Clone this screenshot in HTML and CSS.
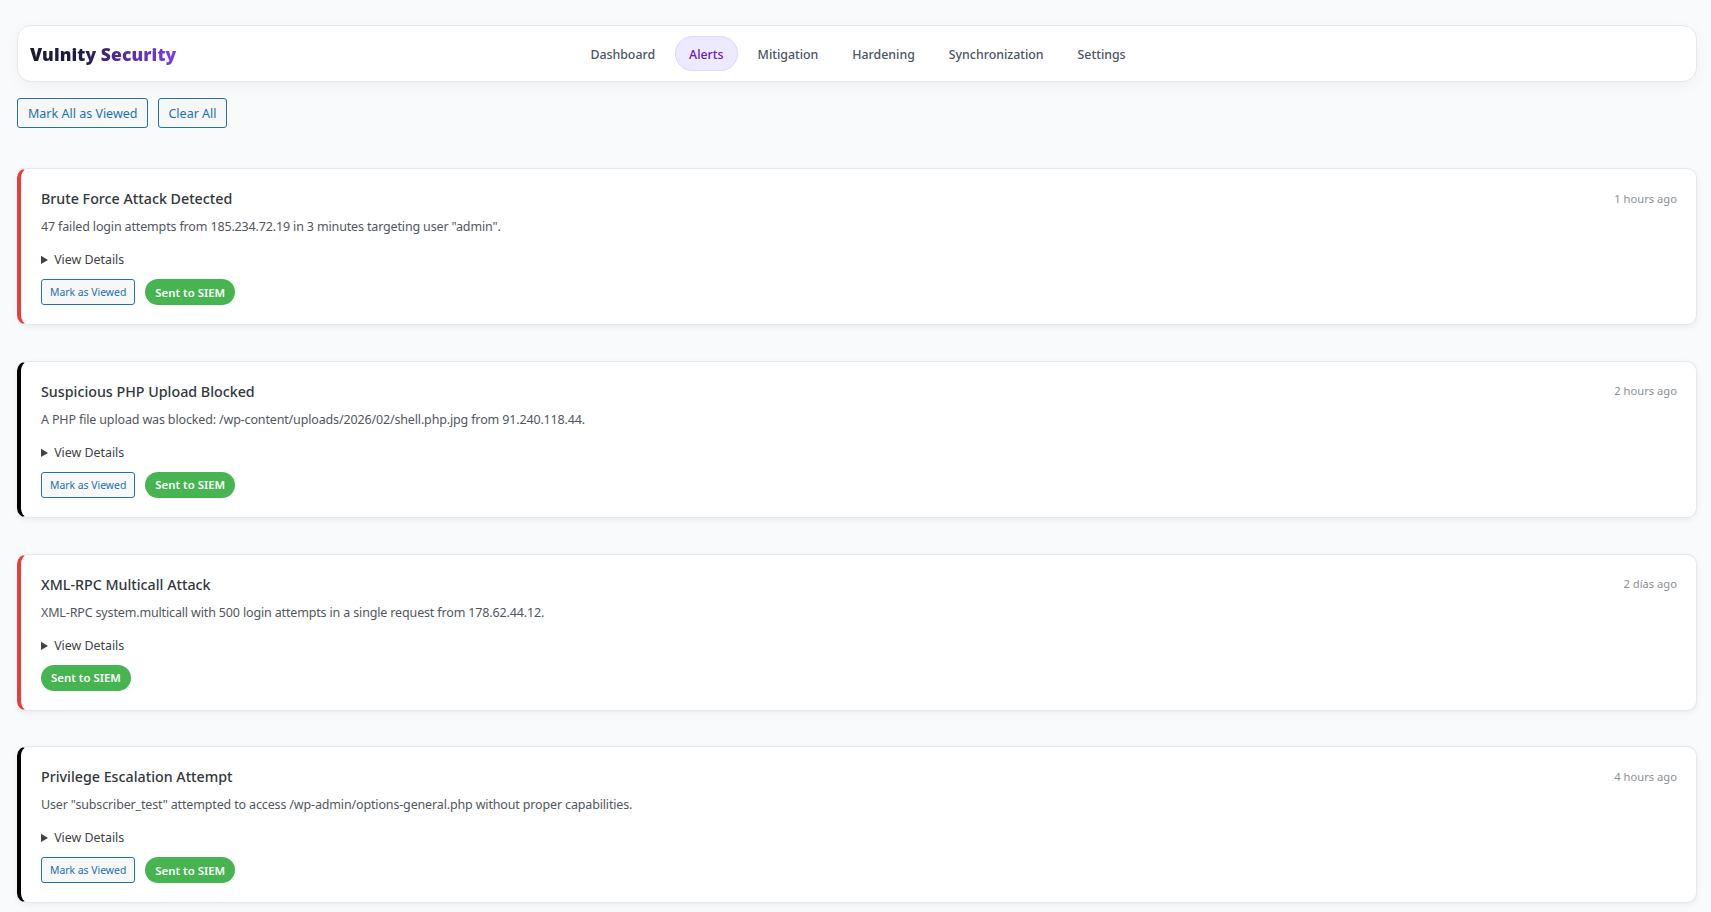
FILE: index.html
```html
<!DOCTYPE html>
<html lang="en">
<head>
<meta charset="utf-8">
<title>Vulnity Security</title>
<link rel="stylesheet" href="styles.css">
</head>
<body>
<header class="topbar">
  <div class="logo">Vulnity Security</div>
  <nav class="nav">
    <a class="nav-item">Dashboard</a>
    <a class="nav-item active">Alerts</a>
    <a class="nav-item">Mitigation</a>
    <a class="nav-item">Hardening</a>
    <a class="nav-item">Synchronization</a>
    <a class="nav-item">Settings</a>
  </nav>
</header>
<div class="bulk">
  <button class="btn">Mark All as Viewed</button>
  <button class="btn tight">Clear All</button>
</div>
<main class="alerts">
  <article class="alert red">
    <div class="alert-head"><h3 class="alert-title">Brute Force Attack Detected</h3><span class="alert-time">1 hours ago</span></div>
    <p class="alert-desc">47 failed login attempts from 185.234.72.19 in 3 minutes targeting user "admin".</p>
    <details class="alert-details"><summary>View Details</summary></details>
    <div class="alert-actions"><button class="btn small">Mark as Viewed</button><span class="siem">Sent to SIEM</span></div>
  </article>
  <article class="alert black">
    <div class="alert-head"><h3 class="alert-title">Suspicious PHP Upload Blocked</h3><span class="alert-time">2 hours ago</span></div>
    <p class="alert-desc">A PHP file upload was blocked: /wp-content/uploads/2026/02/shell.php.jpg from 91.240.118.44.</p>
    <details class="alert-details"><summary>View Details</summary></details>
    <div class="alert-actions"><button class="btn small">Mark as Viewed</button><span class="siem">Sent to SIEM</span></div>
  </article>
  <article class="alert red">
    <div class="alert-head"><h3 class="alert-title">XML-RPC Multicall Attack</h3><span class="alert-time">2 días ago</span></div>
    <p class="alert-desc">XML-RPC system.multicall with 500 login attempts in a single request from 178.62.44.12.</p>
    <details class="alert-details"><summary>View Details</summary></details>
    <div class="alert-actions"><span class="siem">Sent to SIEM</span></div>
  </article>
  <article class="alert black">
    <div class="alert-head"><h3 class="alert-title">Privilege Escalation Attempt</h3><span class="alert-time">4 hours ago</span></div>
    <p class="alert-desc">User "subscriber_test" attempted to access /wp-admin/options-general.php without proper capabilities.</p>
    <details class="alert-details"><summary>View Details</summary></details>
    <div class="alert-actions"><button class="btn small">Mark as Viewed</button><span class="siem">Sent to SIEM</span></div>
  </article>
</main>
</body>
</html>
```
FILE: styles.css
```css
* { box-sizing: border-box; }
html, body { margin: 0; padding: 0; }
body {
  background: #f9fafb;
  font-family: "Noto Sans", "Open Sans", sans-serif;
  font-size: 13px;
  color: #3c434a;
  padding: 25px 14px 0 17px;
  height: 912px;
  overflow: hidden;
}
.topbar {
  height: 57px;
  background: #fff;
  border: 1px solid #e5e7eb;
  border-radius: 14px;
  box-shadow: 0 4px 16px rgba(0,0,0,.04);
  display: grid;
  grid-template-columns: 1fr auto 1fr;
  align-items: center;
  padding: 0 12px;
}
.logo {
  font-family: "Noto Sans", sans-serif;
  font-weight: 900;
  font-size: 17.5px;
  letter-spacing: .1px;
  line-height: 30px;
  justify-self: start;
  background: linear-gradient(90deg, #1a1a2e 0%, #1e1b4b 36%, #4c2a8c 58%, #7c3aed 100%);
  -webkit-background-clip: text;
  background-clip: text;
  color: transparent;
}
.nav { display: flex; gap: 6px; align-items: center; margin-left: 2px; }
.nav-item {
  font-size: 12.35px;
  font-weight: 500;
  color: #4b5563;
  padding: 8.5px 13px 7.5px;
  border: 1px solid transparent;
  border-radius: 18px;
  line-height: 17px;
}
.nav-item.active {
  background: #ede9fe;
  border-color: #ddd6fe;
  color: #6b21a8;
}
.bulk { display: flex; gap: 10px; margin-top: 16px; }
.btn {
  font-family: inherit;
  font-size: 12.5px;
  height: 30px;
  padding: 0 10px;
  color: #2271b1;
  background: #f6f7f7;
  border: 1px solid #2271b1;
  border-radius: 3px;
}
.btn.tight { padding: 0 9px; }
.btn.small { font-size: 10.4px; height: 26px; padding: 0 8px; }
.alerts { display: flex; flex-direction: column; gap: 35.8px; margin-top: 40px; }
.alert {
  height: 157px;
  background: #fff;
  border: 1px solid #e5e7eb;
  border-left: 4px solid #000;
  border-radius: 10px;
  box-shadow: 0 2px 6px rgba(0,0,0,.06);
  padding: 19px 19px 0 20px;
}
.alert.red { border-left-color: #e53e3e; }
.alert.black { border-left-color: #000; }
.alert-head { display: flex; justify-content: space-between; align-items: center; height: 20px; }
.alert-title { margin: 2px 0 0; font-size: 14.25px; font-weight: 500; color: #32373c; line-height: 20px; }
.alert-time { font-size: 11.2px; color: #8c8f94; }
.alert-desc { margin: 10px 0 0; font-size: 12.5px; letter-spacing: -.15px; line-height: 18px; color: #50575e; }
.alert-details { margin-top: 15px; font-size: 12.4px; line-height: 18px; color: #3c434a; }
.alert-actions { display: flex; gap: 10px; margin-top: 10px; align-items: center; }
.siem {
  height: 26px;
  display: inline-flex;
  align-items: center;
  padding: 0 10px;
  background: #46b450;
  color: #fff;
  border-radius: 13px;
  font-size: 11.4px;
  font-weight: 600;
}
```
